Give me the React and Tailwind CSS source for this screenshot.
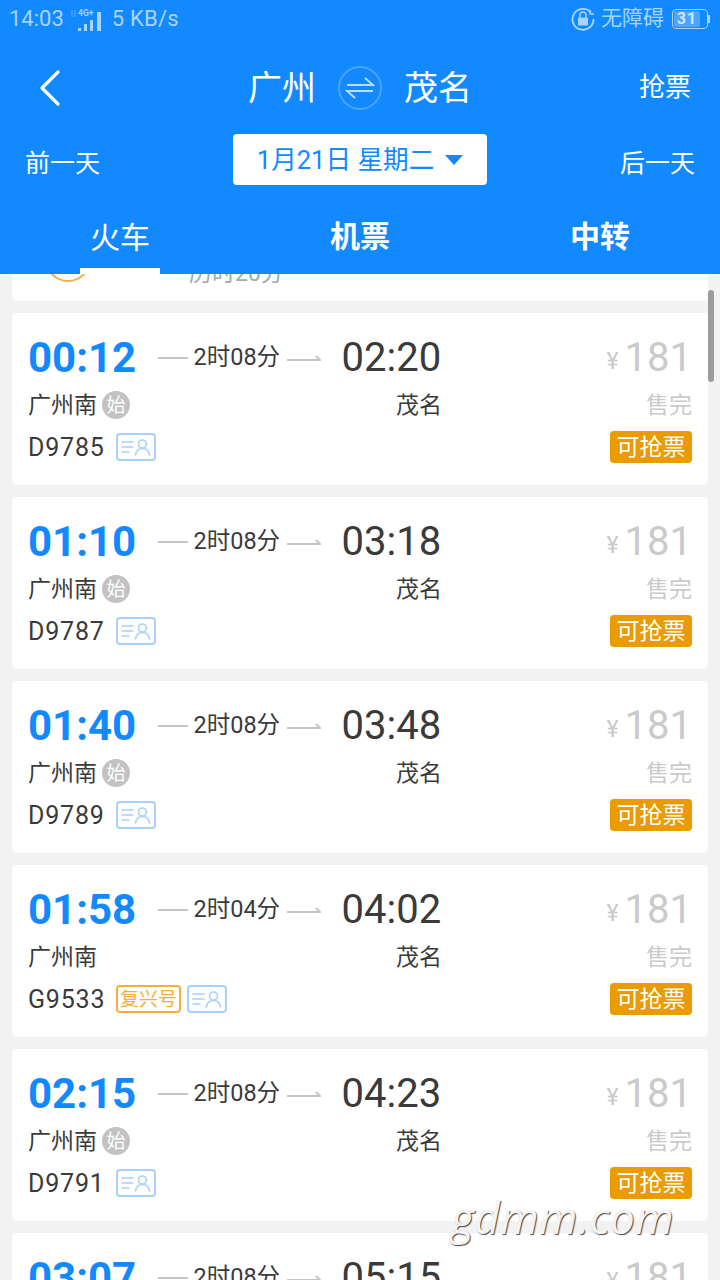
const FONT = "font-['Roboto','Noto_Sans_CJK_SC',sans-serif]"

const TRAINS = [
  { dep: '00:12', dur: '2时08分', arr: '02:20', no: 'D9785', start: true },
  { dep: '01:10', dur: '2时08分', arr: '03:18', no: 'D9787', start: true },
  { dep: '01:40', dur: '2时08分', arr: '03:48', no: 'D9789', start: true },
  { dep: '01:58', dur: '2时04分', arr: '04:02', no: 'G9533', fuxing: true },
  { dep: '02:15', dur: '2时08分', arr: '04:23', no: 'D9791', start: true },
  { dep: '03:07', dur: '2时08分', arr: '05:15', no: 'D9793', start: true },
]

function IdBadge() {
  return (
    <span className="flex h-[28px] w-[40px] items-center justify-center rounded-[4px] border-2 border-[#a9d0fd]">
      <svg width="32" height="20" viewBox="0 0 32 20" fill="none" stroke="#a9d0fd" strokeWidth="1.6" strokeLinecap="round">
        <path d="M2 5h11M2 10h11M2 15h7" />
        <circle cx="22.5" cy="7" r="4" />
        <path d="M15.5 18c.5-4 3.4-6.5 7-6.5s6.500 2.500 7 6.500" />
      </svg>
    </span>
  )
}

function StatusBar() {
  return (
    <div className="flex h-[37px] items-center pl-[9px] pr-[10px] text-[#a9d4ff]">
      <span className="text-[22px] leading-none">14:03</span>
      <svg className="ml-[4px]" width="44" height="24" viewBox="0 0 44 24" fill="currentColor">
        <path d="M4 3v7M7 3v7" stroke="currentColor" strokeWidth="1" opacity="0.5" />
        <text x="10" y="9" fontSize="8.500" fontWeight="700" fontFamily="Roboto">4G+</text>
        <rect x="10" y="21" width="3" height="3" />
        <rect x="16" y="17" width="3" height="7" />
        <rect x="22" y="13" width="3" height="11" />
        <rect x="29" y="5" width="4" height="19" />
      </svg>
      <span className="text-[22px] leading-none tracking-[0.2px]">5 KB/s</span>
      <svg className="ml-auto" width="24" height="24" viewBox="0 0 24 24" fill="none" stroke="currentColor" strokeWidth="1.800">
        <path d="M20 5.500A10.500 10.500 0 1 0 22.500 12" />
        <path d="M19 3v4h4" strokeWidth="1.300" />
        <rect x="7" y="10.500" width="10" height="8" fill="currentColor" stroke="none" />
        <path d="M9 10.500V8a3 3 0 0 1 6 0v2.500" strokeWidth="1.500" />
      </svg>
      <span className="ml-[6px] text-[21px] leading-none">无障碍</span>
      <div className="ml-[8px] flex items-center">
        <div className="flex h-[20px] w-[36px] items-center rounded-[4px] border border-[#a9d4ff] p-[1px]">
          <div className="flex h-full w-[26px] items-center justify-center rounded-[2px] bg-[#4fa5fd] text-[16px] font-bold leading-none tracking-[1px] text-[#cfe6ff]">
            31
          </div>
        </div>
        <div className="h-[8px] w-[2px] bg-[#a9d4ff]" />
      </div>
    </div>
  )
}

function Header() {
  return (
    <div className="z-10 shrink-0 bg-[#1289ff] text-white">
      <StatusBar />
      <div className="flex h-[97px] items-center px-[29px] pt-[4px]">
        <div className="w-[180px]">
          <svg className="ml-[9px]" width="24" height="38" viewBox="0 0 24 38" fill="none" stroke="white" strokeWidth="3.200" strokeLinecap="round" strokeLinejoin="round">
            <path d="M20 3 4 19l16 16" />
          </svg>
        </div>
        <div className="flex flex-1 items-center justify-center">
          <span className="text-[34px] leading-none">广州</span>
          <span className="mx-[22px] flex h-[44px] w-[44px] items-center justify-center rounded-full border-2 border-[#4ca5fd]">
            <svg width="30" height="22" viewBox="0 0 30 22" fill="none" stroke="#bcdcff" strokeWidth="2">
              <path d="M2 8h26L20 1" />
              <path d="M28 14H2l8 7" />
            </svg>
          </span>
          <span className="text-[34px] leading-none">茂名</span>
        </div>
        <div className="w-[180px] pt-[2px] text-right">
          <span className="text-[26px] leading-none">抢票</span>
        </div>
      </div>
      <div className="flex h-[51px] items-center justify-between px-[25px]">
        <span className="w-[180px] pt-[8px] text-[25px] leading-none">前一天</span>
        <div className="flex h-[51px] w-[254px] items-center justify-center rounded-[4px] bg-white text-[#1289ff]">
          <span className="pt-[2px] text-[25.600px] leading-none">1月21日 星期二</span>
          <span className="ml-[11px] h-0 w-0 border-x-[9px] border-t-[10px] border-x-transparent border-t-[#1289ff]" />
        </div>
        <span className="w-[180px] pt-[8px] text-right text-[25px] leading-none">后一天</span>
      </div>
      <div className="mt-[15px] flex h-[74px]">
        <div className="flex flex-1 flex-col items-center justify-end">
          <span className="pb-[15px] text-[30px] leading-none">火车</span>
          <div className="h-[6px] w-[80px] bg-white" />
        </div>
        <div className="flex flex-1 justify-center pt-[22px]">
          <span className="text-[30px] font-bold leading-none">机票</span>
        </div>
        <div className="flex flex-1 justify-center pt-[22px]">
          <span className="text-[30px] font-bold leading-none">中转</span>
        </div>
      </div>
    </div>
  )
}

function TrainCard({ train }) {
  return (
    <div className="flex h-[172px] shrink-0 rounded-[4px] bg-white pl-[16px] pr-[16px] pt-[20px]">
      <div className="flex-1">
        <div className="flex h-[48px] items-center pt-[2px]">
          <span className="w-[129.500px] text-[42px] font-bold leading-none text-[#1289ff]">{train.dep}</span>
          <span className="h-[2px] w-[30px] bg-[#c3c3c3]" />
          <span className="ml-[6px] mr-[7px] w-[86px] whitespace-nowrap text-[23.500px] leading-none text-[#3a3a3a]">{train.dur}</span>
          <svg width="34" height="8" viewBox="0 0 34 8" fill="none" stroke="#c3c3c3" strokeWidth="2">
            <path d="M0 6h33l-4-4" />
          </svg>
          <span className="ml-[21px] text-[40px] leading-none text-[#3a3a3a]">{train.arr}</span>
        </div>
        <div className="mt-[6px] flex h-[36px] items-center">
          <span className="text-[23px] leading-none text-[#3a3a3a]">广州南</span>
          {train.start && (
            <span className="ml-[5px] flex h-[28px] w-[28px] items-center justify-center rounded-full bg-[#c2c2c2] text-[19px] leading-none text-white">
              始
            </span>
          )}
          <span className={`text-[23px] leading-none text-[#3a3a3a] ${train.start ? 'ml-[266px]' : 'ml-[299px]'}`}>茂名</span>
        </div>
        <div className="mt-[6px] flex h-[36px] items-center gap-[12px]">
          <span className="w-[76px] text-[25px] leading-none tracking-[0.8px] text-[#3a3a3a]">{train.no}</span>
          {train.fuxing && (
            <span className="flex h-[28px] w-[65px] items-center justify-center rounded-[4px] border-2 border-[#f9ad3e] text-[19px] leading-none text-[#f9ad3e]">
              复兴号
            </span>
          )}
          <span className={train.fuxing ? 'ml-[-6px]' : ''}>
            <IdBadge />
          </span>
        </div>
      </div>
      <div className="flex w-[100px] flex-col items-end">
        <div className="flex h-[48px] items-center pt-[2px] text-[#cacaca]">
          <span className="mr-[6px] mt-[6px] text-[23px] leading-none">¥</span>
          <span className="text-[40px] leading-none">181</span>
        </div>
        <div className="mt-[6px] flex h-[36px] items-center text-[23px] leading-none text-[#cacaca]">售完</div>
        <div className="mt-[8px] flex h-[32px] w-[82px] items-center justify-center rounded-[4px] bg-[#ec9a02] text-[23px] leading-none text-white">
          可抢票
        </div>
      </div>
    </div>
  )
}

export default function App() {
  return (
    <div className={`relative flex h-[1280px] w-[720px] flex-col overflow-hidden bg-[#f2f2f2] ${FONT}`}>
      <Header />
      <div className="flex flex-col gap-[12px] px-[12px]">
        {/* card cut off by the header */}
        <div className="relative h-[27px] shrink-0 overflow-hidden rounded-b-[4px] bg-white">
          <div className="absolute left-[33px] top-[-47px] h-[55px] w-[46px] rounded-full border-2 border-[#f9ad3e]" />
          <span className="absolute left-[177px] top-[-13px] whitespace-nowrap text-[23px] leading-[26px] text-[#a8a8a8]">历时20分</span>
        </div>
        {TRAINS.map((t) => (
          <TrainCard key={t.no} train={t} />
        ))}
      </div>

      {/* scroll thumb */}
      <div className="absolute left-[708px] top-[290px] h-[92px] w-[6px] rounded-[3px] bg-[#9a9da0]" />

      {/* watermark */}
      <span
        className="absolute left-[451px] top-[1189px] font-['Open_Sans',sans-serif] text-[44px] italic leading-[56px] tracking-[0.5px] text-[#f4f4f4] [text-shadow:1px_1px_1px_#444]"
      >
        gdmm.com
      </span>
    </div>
  )
}
